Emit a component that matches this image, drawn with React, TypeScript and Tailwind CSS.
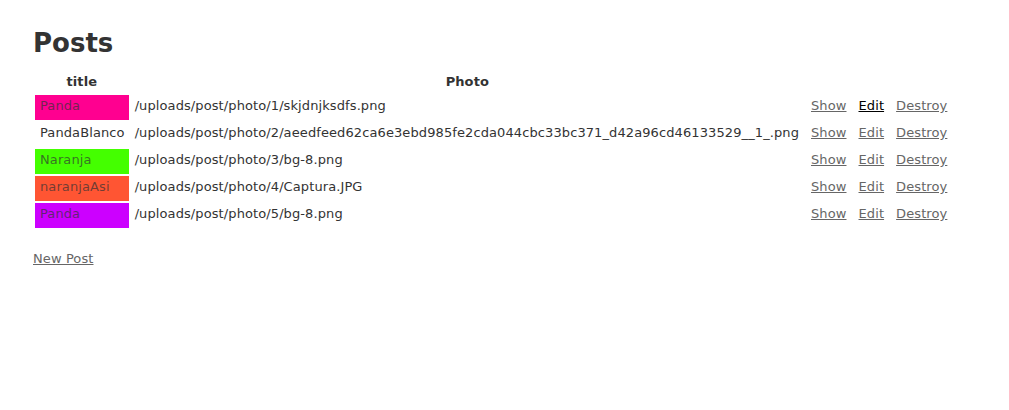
import React from 'react';

interface Post {
  title: string;
  color: string;
  photo: string;
}

const posts: Post[] = [
  { title: 'Panda', color: 'bg-[#ff0090]', photo: '/uploads/post/photo/1/skjdnjksdfs.png' },
  { title: 'PandaBlanco', color: '', photo: '/uploads/post/photo/2/aeedfeed62ca6e3ebd985fe2cda044cbc33bc371_d42a96cd46133529__1_.png' },
  { title: 'Naranja', color: 'bg-[#44ff00]', photo: '/uploads/post/photo/3/bg-8.png' },
  { title: 'naranjaAsi', color: 'bg-[#ff5533]', photo: '/uploads/post/photo/4/Captura.JPG' },
  { title: 'Panda', color: 'bg-[#cc00ff]', photo: '/uploads/post/photo/5/bg-8.png' },
];

// cells sit text near the top, like the scaffold's table
const cell = 'h-[25px] px-[5px] pt-[2px] align-top whitespace-nowrap';
const head = 'h-[18px] px-[5px] pt-0 pb-0 align-top leading-[14px] font-bold';

const App: React.FC = () => {
  return (
    <div className="min-h-[410px] bg-white px-[33px] pt-[28px] text-[13px] leading-[18px] tracking-[0.1px] text-[#333] font-['DejaVu_Sans',Verdana,sans-serif]">
      <h1 className="text-[26px] leading-[30px] font-bold tracking-normal">Posts</h1>

      <table className="mt-[15px] border-separate border-spacing-[2px]">
        <thead>
          <tr>
            <th className={head}>title</th>
            <th className={head}>Photo</th>
            <th colSpan={3}></th>
          </tr>
        </thead>
        <tbody>
          {posts.map((post, i) => (
            <tr key={i}>
              <td className={`${cell} pl-[5px] pr-[4px] ${post.color}`}>
                <span className={post.color ? 'text-[#333]/70' : ''}>{post.title}</span>
              </td>
              <td className={`${cell} pl-[4px]`}>{post.photo}</td>
              <td className={cell}>
                <a href="#" className="underline text-[#666]">Show</a>
              </td>
              <td className={cell}>
                <a href="#" className={`underline ${i === 0 ? 'text-black' : 'text-[#666]'}`}>Edit</a>
              </td>
              <td className={cell}>
                <a href="#" className="underline text-[#666]">Destroy</a>
              </td>
            </tr>
          ))}
        </tbody>
      </table>

      <div className="mt-[20px]">
        <a href="#" className="underline text-[#666]">New Post</a>
      </div>
    </div>
  );
};

export default App;
